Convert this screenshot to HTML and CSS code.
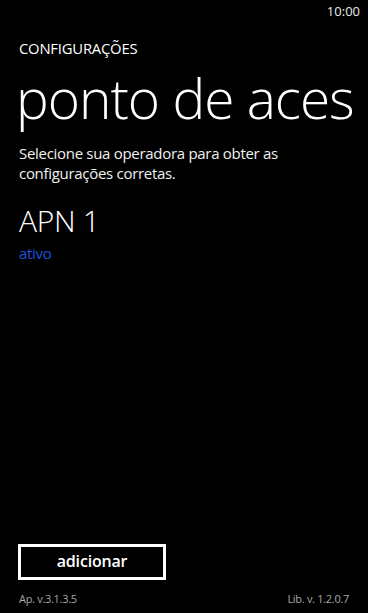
FILE: index.html
```html
<!DOCTYPE html>
<html lang="pt">
<head>
<meta charset="utf-8">
<link rel="stylesheet" href="styles.css">
</head>
<body>
<div class="screen">
  <div class="status"><span class="time">10:00</span></div>
  <div class="content">
    <div class="app-title">CONFIGURAÇÕES</div>
    <div class="page-title">ponto de aces</div>
    <p class="desc">Selecione sua operadora para obter as configurações corretas.</p>
    <div class="item">
      <div class="item-name">APN 1</div>
      <div class="item-status">ativo</div>
    </div>
  </div>
  <div class="bottom">
    <button class="btn">adicionar</button>
    <div class="versions">
      <span>Ap. v.3.1.3.5</span>
      <span>Lib. v. 1.2.0.7</span>
    </div>
  </div>
</div>
</body>
</html>
```
FILE: styles.css
```css
* { box-sizing: border-box; }
html, body { margin: 0; padding: 0; background: #000; }
body { font-family: "Open Sans", "Noto Sans", sans-serif; color: #fff; }
.screen { width: 368px; height: 613px; display: flex; flex-direction: column; overflow: hidden; }
.status { height: 24px; display: flex; justify-content: flex-end; padding: 3px 8px 0 0; }
.time { font-size: 13px; line-height: 16px; color: #e8e8e8; }
.content { flex: 1; padding: 0 18px 0 19px; }
.app-title { margin-top: 14px; font-size: 14.8px; line-height: 20px; letter-spacing: -0.2px; }
.page-title { margin-top: 9px; margin-left: -3px; font-size: 55px; font-weight: 300; line-height: 62px; letter-spacing: -1px; white-space: nowrap; }
.desc { margin: 14px 0 0; font-size: 15px; line-height: 20px; letter-spacing: -0.3px; color: #f0f0f0; }
.item { margin-top: 20px; }
.item-name { font-size: 30px; line-height: 36px; font-weight: 300; letter-spacing: -0.3px; }
.item-status { margin-top: 4px; font-size: 15px; line-height: 20px; color: #1e50dc; letter-spacing: -0.3px; }
.bottom { padding: 0 19px 4px 18px; }
.btn { display: block; width: 148px; height: 36px; background: transparent; border: 3px solid #fff; color: #fff; font-family: inherit; font-size: 16px; font-weight: 600; letter-spacing: -0.2px; padding: 0 0 2px; }
.versions { display: flex; justify-content: space-between; margin-top: 9px; padding-left: 1px; font-size: 11px; line-height: 20px; color: #a8a8a8; letter-spacing: -0.3px; }
```
